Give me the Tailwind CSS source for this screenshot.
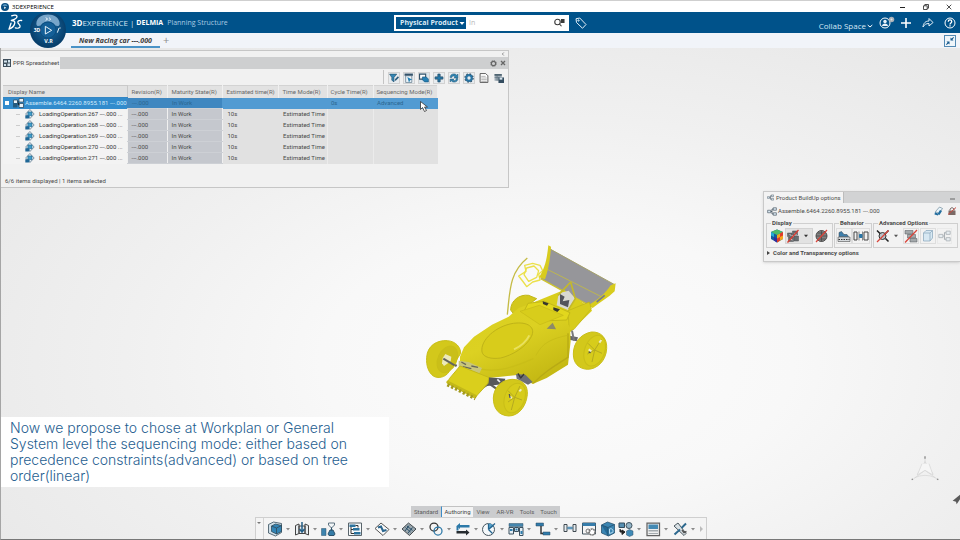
<!DOCTYPE html>
<html lang="en">
<head>
    <meta charset="UTF-8">
    <meta name="viewport" content="width=device-width, initial-scale=1.0">
    <title>3DEXPERIENCE</title>
    <script src="https://cdn.jsdelivr.net/npm/@tailwindcss/browser@4"></script>
</head>
<body class="h-screen flex flex-col overflow-hidden bg-[#ececec] font-['Open_Sans','Noto_Sans',sans-serif] text-[6px] leading-[10px] text-[#4a4a4a]">

    <!-- Shared icons -->
    <svg class="hidden" xmlns="http://www.w3.org/2000/svg">
        <symbol id="i-arrow" viewBox="0 0 6 6"><path d="M1 2h4L3 4.500z" fill="#8a8a8a"/></symbol>
        <symbol id="i-tree" viewBox="0 0 16 14">
            <path d="M1 5h5v4H1zM10 1h5v4h-5zM10 9h5v4h-5z" fill="#d8e6f0" stroke="#43525e"/>
            <path d="M6 7h2V3h2M8 7v4h2" fill="none" stroke="#43525e" stroke-width="1.300"/>
        </symbol>
        <symbol id="i-oper" viewBox="0 0 12 12">
            <path d="M6.500 .6 11.600 6 6.500 11.400 1.400 6z" fill="#f3f8fb" stroke="#4c6c82" stroke-width=".9"/>
            <path d="M4 3.500h5v4.500H4z" fill="#3f9cc9" stroke="#1d5d85" stroke-width=".7"/>
            <path d="M1 7.500h4l1.500 2-1.500 2H1z" fill="#1f6796"/>
        </symbol>
    </svg>

    <!-- Title bar -->
    <div class="h-3 shrink-0 flex items-center justify-between border-t border-[#cfcfcf] bg-white pl-px pr-2">
        <div class="flex items-center gap-[3px] text-black">
            <svg class="w-2 h-2" viewBox="0 0 10 10"><circle cx="5" cy="5" r="5" fill="#0c4f80"/><path d="M2 3.500a3 2 0 0 1 6 0z" fill="#6fa8cf"/><path d="M4 4.500 6.500 6 4 7.500z" fill="#fff"/></svg>
            <span>3DEXPERIENCE</span>
        </div>
        <div class="flex items-center gap-[17px]">
            <button aria-label="Minimize"><svg class="w-[6px] h-[6px]" viewBox="0 0 6 6"><path d="M0 3.500h5" stroke="#222"/></svg></button>
            <button aria-label="Restore"><svg class="w-[6px] h-[6px]" viewBox="0 0 6 6" fill="none" stroke="#222" stroke-width=".8"><path d="M.5 1.800h3.700v3.700H.5zM1.800 1.800V.5h3.700v3.700H4.200"/></svg></button>
            <button aria-label="Close"><svg class="w-[6px] h-[6px]" viewBox="0 0 6 6"><path d="M.7.7l4.600 4.600M5.300.7.7 5.300" stroke="#222" stroke-width=".8"/></svg></button>
        </div>
    </div>

    <!-- Top bar -->
    <header class="relative h-[21px] shrink-0 grid grid-cols-[394px_1fr_auto] items-center bg-[#00528a] text-white">
        <div class="flex items-center pl-2">
            <svg class="w-[15px] h-[17px]" viewBox="0 0 45 50" fill="none" stroke="#fff" stroke-width="4" stroke-linecap="round" stroke-linejoin="round">
                <path d="M11 5c7-3 16-3 16 2 0 6-10 10-17 12 8 0 12 3 10 9-2 8-9 14-17 17l6-18"/>
                <path d="M41 19c-8-1-13 2-11 7 2 4 8 7 6 12-2 4-9 5-14 3"/>
            </svg>
            <h1 class="ml-[49px] flex items-center gap-[2px] text-[8px] text-[#d5e4f0]">
                <span><b class="text-white">3D</b>EXPERIENCE</span>
                <span>|</span>
                <b class="text-[7px] text-white">DELMIA</b>
                <span class="ml-[2px] text-[7px] text-[#a9cae3]">Planning Structure</span>
            </h1>
        </div>
        <div class="flex items-center gap-[6px]">
            <form class="flex h-4 w-[175px] items-center bg-white p-[2px] pr-1">
                <div class="relative h-full w-[70px] bg-[#00528a]">
                    <select aria-label="Search type" class="h-full w-full appearance-none bg-transparent pl-[4px] text-[7px] leading-3 font-bold text-[#dcebf6]">
                        <option>Physical Product</option>
                    </select>
                    <svg class="pointer-events-none absolute right-px top-1 w-[6px] h-[6px]" viewBox="0 0 6 6"><path d="M.5 1h5L3 4z" fill="#fff"/></svg>
                </div>
                <input type="text" aria-label="Search" placeholder="In" class="min-w-0 flex-1 px-[3px] text-[7px] text-gray-600 outline-none placeholder:text-[#b9b9b9]">
                <button type="button" aria-label="Search">
                    <svg class="w-[11px] h-[9px]" viewBox="0 0 22 18" fill="none" stroke="#3b3b3b" stroke-width="2.200"><circle cx="7" cy="8" r="5.500"/><path d="m11 12 4 4.500"/><path d="M15 3h5v6h-5z" fill="#3b3b3b"/></svg>
                </button>
            </form>
            <button aria-label="Tags">
                <svg class="w-3 h-3" viewBox="0 0 24 24" fill="none" stroke="#e5f0f8" stroke-width="2" stroke-linejoin="round"><path d="M2 3.500 9.500 2 22 15l-7 7.500L3 11z"/><circle cx="7" cy="7" r="1.300"/></svg>
            </button>
        </div>
        <div class="flex items-center pr-1">
            <button class="flex items-center gap-px pt-[7px] text-[8px] text-[#d5e7f5]">Collab Space
                <svg class="w-[6px] h-[6px]" viewBox="0 0 6 6" fill="none" stroke="#fff"><path d="m.7 2 2.300 2 2.300-2"/></svg>
            </button>
            <button class="ml-[6px]" aria-label="Profile">
                <svg class="w-4 h-[13px]" viewBox="0 0 32 26"><circle cx="12" cy="14" r="10" fill="none" stroke="#fff" stroke-width="2"/><circle cx="12" cy="11" r="3.500" fill="#e8f2f9"/><path d="M6 20c0-7 12-7 12 0z" fill="#e8f2f9"/><circle cx="25" cy="7" r="5.500" fill="#a9b1b8"/><circle cx="25" cy="7" r="2" fill="#e6e6e6"/></svg>
            </button>
            <button class="ml-[6px]" aria-label="Add"><svg class="w-[10px] h-[10px]" viewBox="0 0 10 10"><path d="M5 0v10M0 5h10" stroke="#fff" stroke-width="1.600"/></svg></button>
            <button class="ml-[11px]" aria-label="Share"><svg class="w-3 h-3" viewBox="0 0 24 24" fill="none" stroke="#e5f1f9" stroke-width="2" stroke-linejoin="round"><path d="M2 20c1-8 5-12 12-12V3l8 8-8 7v-5c-6 0-9 2-12 7z"/></svg></button>
            <button class="ml-[10px]" aria-label="Help"><svg class="w-3 h-3" viewBox="0 0 24 24" fill="none" stroke="#fff" stroke-width="2"><circle cx="12" cy="12" r="10"/><path d="M8.500 9.500c0-5 7-4.500 7-.5 0 3-3.500 3-3.500 6M12 16.500v2.500" stroke-width="2.600"/></svg></button>
        </div>

        <!-- Compass -->
        <button class="absolute left-[30px] top-0 z-10" aria-label="Compass">
            <svg class="w-9 h-9" viewBox="0 0 108 108">
                <defs><radialGradient id="compass" cx=".5" cy=".45"><stop offset="0" stop-color="#1b6ea8"/><stop offset="1" stop-color="#073f6c"/></radialGradient></defs>
                <circle cx="54" cy="54" r="54" fill="url(#compass)"/>
                <path d="M19 35C20-2 88-2 89 35c0 9-9 7-14 5-8-15-34-15-42 0-6 2-14 4-14-5z" fill="#77a5c9"/>
                <circle cx="54" cy="54" r="24" fill="#145f97" stroke="#0a4775" stroke-width="2"/>
                <path d="M46 43v23l19-11z" fill="none" stroke="#e8f3fa" stroke-width="3"/>
                <path d="M47 17l6 4-6 4M57 17l5 4-5 5" fill="none" stroke="#eaf4fb" stroke-width="3"/>
                <path d="M87 48l-5 14M90 46v4" stroke="#e8f3fa" stroke-width="3"/>
                <text x="11" y="61" font-size="15" font-weight="700" fill="#fff">3D</text>
                <text x="43" y="94" font-size="16" font-weight="700" fill="#fff">V.R</text>
            </svg>
        </button>
    </header>

    <!-- Document tabs -->
    <nav class="h-[15px] shrink-0 flex items-stretch bg-[#f1f4f9] pl-[71px] pr-1">
        <a href="#" class="w-[89px] border-b-2 border-[#4a93c7] pl-2 text-[7px] leading-[15px] font-bold italic text-[#3d3d3d] whitespace-nowrap">New Racing car ---.000</a>
        <button class="ml-[3px] pb-px text-[11px] text-[#8d8d8d]" aria-label="New tab">+</button>
        <button class="ml-auto mt-[2px] h-3 w-3 border border-[#5289b3] bg-[#eef5fa]" aria-label="Collapse">
            <svg class="w-[10px] h-[10px]" viewBox="0 0 20 20" fill="#14588c"><path d="m11 3 2 2 4-3 1 1-3 4 2 2h-6zM9 17l-2-2-4 3-1-1 3-4-2-2h6z"/></svg>
        </button>
    </nav>

    <!-- 3D canvas -->
    <main class="relative flex-1 overflow-hidden border-l border-b border-l-[#a5a5a5] border-b-[#777] bg-[radial-gradient(ellipse_at_58%_64%,#fcfcfc_0%,#f8f8f8_30%,#f0f0f0_55%,#e8e8e8_85%)] font-[Roboto,'Noto_Sans',sans-serif]">

        <!-- PPR spreadsheet -->
        <section class="absolute left-0 top-[2px] flex w-[508px] flex-col border border-l-0 border-[#c6c6c6] bg-[#f1f1f1]">
            <div class="flex h-[6px] justify-end pr-[3px]">
                <svg class="w-[4px] h-[6px]" viewBox="0 0 4 6" fill="none" stroke="#777" stroke-width=".8"><path d="M2.800 1.500 1.300 3l1.500 1.500"/></svg>
            </div>
            <div class="flex h-3 items-stretch justify-between bg-[#cecfd0]">
                <h2 class="flex w-[59px] items-center gap-[2px] bg-[#f3f3f3] pl-[2px] whitespace-nowrap">
                    <svg class="w-2 h-2 shrink-0" viewBox="0 0 16 16"><path d="M0 0h16v16H0z" fill="#40505d"/><path d="M2 3h6v4H2zM10 2h4v5h-4zM2 10h4v4H2zM9 9h5v5H9z" fill="#d5e5ef"/></svg>
                    PPR Spreadsheet
                </h2>
                <div class="flex items-center gap-[3px] pr-[2px]">
                    <button aria-label="Settings"><svg class="w-[7px] h-[7px]" viewBox="0 0 14 14"><circle cx="7" cy="7" r="4.200" fill="none" stroke="#666" stroke-width="2.200"/><circle cx="7" cy="7" r="6" fill="none" stroke="#666" stroke-width="1.500" stroke-dasharray="2.400 2.300"/></svg></button>
                    <button aria-label="Close"><svg class="w-[6px] h-[6px]" viewBox="0 0 6 6"><path d="m1 1 4 4M5 1 1 5" stroke="#666" stroke-width="1.300"/></svg></button>
                </div>
            </div>
            <div class="flex h-4 items-end justify-end gap-[3px] pr-[3px] pb-px">
                <span class="h-[14px] w-px bg-[#c4c4c4] mr-px"></span>
                <button class="border border-[#d2d2d2] bg-[#e8ecef]" aria-label="Filter"><svg class="w-[10px] h-[10px]" viewBox="0 0 18 18"><path d="M1 2h13l-5 6v8l-4-3V8z" fill="#3385b3" stroke="#254a63"/><path d="m10 15 1-4 5-5 2 2-5 5z" fill="#2e5e7f"/></svg></button>
                <button class="border border-[#d2d2d2] bg-[#e8ecef]" aria-label="Select in tree"><svg class="w-[10px] h-[10px]" viewBox="0 0 18 18"><path d="M1 1h15v4H1z" fill="#34536a"/><path d="M3 5h11v12H3z" fill="#eef5f9" stroke="#34536a"/><path d="m6 7 9 5-4 1-2 4z" fill="#2680b4"/></svg></button>
                <button class="border border-[#d2d2d2] bg-[#dbe4ea]" aria-label="Linked selection"><svg class="w-[10px] h-[10px]" viewBox="0 0 18 18"><path d="M1 2h11v9H1z" fill="#fff" stroke="#34536a" stroke-width="2"/><path d="M6 7h7l4 4v5h-7l-4-4z" fill="#2680b4" stroke="#1b5277"/></svg></button>
                <button class="border border-[#d2d2d2] bg-[#e8ecef]" aria-label="Add"><svg class="w-[10px] h-[10px]" viewBox="0 0 18 18"><path d="M7 2h4v5h5v4h-5v5H7v-5H2V7h5z" fill="#257aaa" stroke="#28516d" stroke-width="1.500"/></svg></button>
                <button class="border border-[#d2d2d2] bg-[#e8ecef]" aria-label="Refresh"><svg class="w-[10px] h-[10px]" viewBox="0 0 18 18" fill="#2f86b5" stroke="#285b7a"><path d="M2 8c0-7 9-8 12-4l2-2v7h-7l2-2c-2-3-6-2-6 1zM16 10c0 7-9 8-12 4l-2 2v-5h7l-2 2c3 2 6 0 6-3z"/></svg></button>
                <button class="border border-[#d2d2d2] bg-[#e8ecef]" aria-label="Options"><svg class="w-[10px] h-[10px]" viewBox="0 0 18 18" fill="none"><circle cx="9" cy="9" r="5" stroke="#2775a5" stroke-width="4"/><circle cx="9" cy="9" r="7.500" stroke="#34536a" stroke-width="2" stroke-dasharray="3 2.900"/></svg></button>
                <button class="border border-transparent" aria-label="Report"><svg class="w-[10px] h-[10px]" viewBox="0 0 18 18"><path d="M2 1h10l4 4v12H2z" fill="#fff" stroke="#444" stroke-width="1.500"/><path d="M4 6h8M4 9h10M4 12h10M4 15h10" stroke="#777"/></svg></button>
                <button class="border border-transparent" aria-label="Save table"><svg class="w-[10px] h-[10px]" viewBox="0 0 18 18"><path d="M1 2h13v12H1z" fill="#9daab4"/><path d="M1 2h13v3H1zM1 8h13v1H1zM5 5h1v9H5z" fill="#506572"/><path d="M8 8h10v10H8z" fill="#344d60"/><path d="M10 8h5v4h-5z" fill="#d9e6ef"/></svg></button>
            </div>
            <table class="ml-[2px] w-[435px] table-fixed border-collapse whitespace-nowrap text-left">
                <colgroup><col class="w-[124px]"><col class="w-10"><col class="w-[55px]"><col class="w-14"><col class="w-[49px]"><col class="w-[46px]"><col></colgroup>
                <thead>
                    <tr class="h-3 bg-[#e2e2e2] text-[#686868]">
                        <th class="border-t border-r border-[#c9c9c9] border-b border-b-[#3486c4] p-0 pl-[5px] font-normal">Display Name</th>
                        <th class="border-t border-x border-[#d3d3d3] border-x-[#f0f0f0] p-0 pl-1 font-normal">Revision(R)</th>
                        <th class="border-t border-x border-[#d3d3d3] border-x-[#f0f0f0] p-0 pl-1 font-normal">Maturity State(R)</th>
                        <th class="border-t border-x border-[#d3d3d3] border-x-[#f0f0f0] p-0 pl-1 font-normal">Estimated time(R)</th>
                        <th class="border-t border-x border-[#d3d3d3] border-x-[#f0f0f0] p-0 pl-1 font-normal">Time Mode(R)</th>
                        <th class="border-t border-x border-[#d3d3d3] border-x-[#f0f0f0] p-0 pl-[3px] font-normal">Cycle Time(R)</th>
                        <th class="border-t border-x border-[#d3d3d3] border-x-[#f0f0f0] p-0 pl-[3px] font-normal">Sequencing Mode(R)</th>
                    </tr>
                </thead>
                <tbody>
                    <tr class="h-[11px] bg-[#529bd2] text-[#2b6690]">
                        <td class="bg-[#328ccd] p-0 text-[#d3ebfb]">
                            <div class="flex items-center pl-[2px]">
                                <span class="h-[4px] w-[4px] shrink-0 bg-white"></span>
                                <svg class="ml-[4px] w-[11px] h-[10px] shrink-0" viewBox="0 0 22 20"><path d="M1 4h8v7H1zM12 1h9v7h-9zM12 11h9v8h-9z" fill="#e9f2f8" stroke="#29475c" stroke-width="1.500"/><path d="M0 10h9v9H0z" fill="#245b80"/><path d="M9 7h3M10 7v7h3" stroke="#29475c" stroke-width="1.500"/></svg>
                                <span class="ml-px">Assemble.6464.2260.8955.181 ---.000</span>
                            </div>
                        </td>
                        <td class="bg-[#3f87c0] p-0 pl-[5px]">---.000</td>
                        <td class="bg-[#3f87c0] p-0 pl-[5px]">In Work</td>
                        <td class="p-0"></td>
                        <td class="p-0"></td>
                        <td class="p-0 pl-1">0s</td>
                        <td class="p-0 pl-1">Advanced</td>
                    </tr>
                    <tr class="h-[11px] bg-[#e1e1e1]">
                        <td class="bg-[#f3f3f3] p-0"><div class="flex items-center gap-[4px] pl-[13px]"><span class="h-px w-1 shrink-0 bg-[#ccc]"></span><svg class="w-[11px] h-[10px] shrink-0"><use href="#i-oper"/></svg><span class="text-[#333]">LoadingOperation.267 ---.000 ...</span></div></td>
                        <td class="border border-[#cdd0d5] border-x-[#f0f0f0] bg-[#c5c8ce] p-0 pl-1">---.000</td>
                        <td class="border border-[#cdd0d5] border-x-[#f0f0f0] bg-[#c5c8ce] p-0 pl-1">In Work</td>
                        <td class="p-0 pl-[5px]">10s</td>
                        <td class="p-0 pl-[5px]">Estimated Time</td>
                        <td class="border-x border-[#ebebeb] p-0"></td>
                        <td class="p-0"></td>
                    </tr>
                    <tr class="h-[11px] bg-[#e1e1e1]">
                        <td class="bg-[#f3f3f3] p-0"><div class="flex items-center gap-[4px] pl-[13px]"><span class="h-px w-1 shrink-0 bg-[#ccc]"></span><svg class="w-[11px] h-[10px] shrink-0"><use href="#i-oper"/></svg><span class="text-[#333]">LoadingOperation.268 ---.000 ...</span></div></td>
                        <td class="border border-[#cdd0d5] border-x-[#f0f0f0] bg-[#c5c8ce] p-0 pl-1">---.000</td>
                        <td class="border border-[#cdd0d5] border-x-[#f0f0f0] bg-[#c5c8ce] p-0 pl-1">In Work</td>
                        <td class="p-0 pl-[5px]">10s</td>
                        <td class="p-0 pl-[5px]">Estimated Time</td>
                        <td class="border-x border-[#ebebeb] p-0"></td>
                        <td class="p-0"></td>
                    </tr>
                    <tr class="h-[11px] bg-[#e1e1e1]">
                        <td class="bg-[#f3f3f3] p-0"><div class="flex items-center gap-[4px] pl-[13px]"><span class="h-px w-1 shrink-0 bg-[#ccc]"></span><svg class="w-[11px] h-[10px] shrink-0"><use href="#i-oper"/></svg><span class="text-[#333]">LoadingOperation.269 ---.000 ...</span></div></td>
                        <td class="border border-[#cdd0d5] border-x-[#f0f0f0] bg-[#c5c8ce] p-0 pl-1">---.000</td>
                        <td class="border border-[#cdd0d5] border-x-[#f0f0f0] bg-[#c5c8ce] p-0 pl-1">In Work</td>
                        <td class="p-0 pl-[5px]">10s</td>
                        <td class="p-0 pl-[5px]">Estimated Time</td>
                        <td class="border-x border-[#ebebeb] p-0"></td>
                        <td class="p-0"></td>
                    </tr>
                    <tr class="h-[11px] bg-[#e1e1e1]">
                        <td class="bg-[#f3f3f3] p-0"><div class="flex items-center gap-[4px] pl-[13px]"><span class="h-px w-1 shrink-0 bg-[#ccc]"></span><svg class="w-[11px] h-[10px] shrink-0"><use href="#i-oper"/></svg><span class="text-[#333]">LoadingOperation.270 ---.000 ...</span></div></td>
                        <td class="border border-[#cdd0d5] border-x-[#f0f0f0] bg-[#c5c8ce] p-0 pl-1">---.000</td>
                        <td class="border border-[#cdd0d5] border-x-[#f0f0f0] bg-[#c5c8ce] p-0 pl-1">In Work</td>
                        <td class="p-0 pl-[5px]">10s</td>
                        <td class="p-0 pl-[5px]">Estimated Time</td>
                        <td class="border-x border-[#ebebeb] p-0"></td>
                        <td class="p-0"></td>
                    </tr>
                    <tr class="h-[11px] bg-[#e1e1e1]">
                        <td class="bg-[#f3f3f3] p-0"><div class="flex items-center gap-[4px] pl-[13px]"><span class="h-px w-1 shrink-0 bg-[#ccc]"></span><svg class="w-[11px] h-[10px] shrink-0"><use href="#i-oper"/></svg><span class="text-[#333]">LoadingOperation.271 ---.000 ...</span></div></td>
                        <td class="border border-[#cdd0d5] border-x-[#f0f0f0] bg-[#c5c8ce] p-0 pl-1">---.000</td>
                        <td class="border border-[#cdd0d5] border-x-[#f0f0f0] bg-[#c5c8ce] p-0 pl-1">In Work</td>
                        <td class="p-0 pl-[5px]">10s</td>
                        <td class="p-0 pl-[5px]">Estimated Time</td>
                        <td class="border-x border-[#ebebeb] p-0"></td>
                        <td class="p-0"></td>
                    </tr>
                </tbody>
            </table>
            <p class="mt-3 pb-px pl-1">6/6 items displayed | 1 items selected</p>
        </section>

        <!-- Mouse pointer -->
        <svg class="absolute left-[419px] top-[53px] w-2 h-[11px]" viewBox="0 0 16 22"><path d="M1 1v16l4-4 4 8 4-2-4-7h6z" fill="#fff" stroke="#333" stroke-width="1.600"/></svg>

        <!-- Racing car -->
        <svg class="absolute left-[409px] top-[192px] w-[220px] h-[190px]" viewBox="0 0 660 570" stroke-linejoin="round">
            <defs>
                <linearGradient id="body" x1="0" y1="0" x2=".6" y2="1"><stop offset="0" stop-color="#d9ce20"/><stop offset=".5" stop-color="#dcd122"/><stop offset="1" stop-color="#c5b914"/></linearGradient>
            </defs>
            <!-- antenna and bracket -->
            <path d="M292 224c8-70 5-125 60-170" fill="none" stroke="#c5bb45" stroke-width="4"/>
            <path d="m326 108 22-14-4-18 24-6 22 6 8 16-12 10 4 18-22 6-18 14-10-14z" fill="none" stroke="#ebe04a" stroke-width="4"/>
            <path d="m342 104 8-20 22-6 14 14-6 20-24 12z" fill="none" stroke="#ebe04a" stroke-width="4"/>
            <!-- rear wing -->
            <path d="m420 26 194 108-70 66-152-84 14-30z" fill="#96969a"/>
            <path d="m404 84 170 86" stroke="#cfc42e" stroke-width="2"/>
            <path d="m392 116 152 84" stroke="#cfc42e" stroke-width="4"/>
            <path d="M420 27 614 134" stroke="#a5a16a" stroke-width="3"/>
            <path d="m415 16 8 4c-2 36-8 70-18 98l-18-6c18-28 24-56 28-96z" fill="#d8cc1e"/>
            <path d="m617 130-3 24c-20 20-46 34-66 50l-14-8c30-16 52-36 68-60z" fill="#d8cc1e"/>
            <path d="m584 166-24 20" stroke="#777b8a" stroke-width="5"/>
            <!-- rear tower -->
            <path d="M302 210c0-28 26-48 54-44l24 10-66 50z" fill="#d3c81d" stroke="#c2b718" stroke-width="3"/>
            <path d="m368 188 94-38 80 54 4 8-68 66-120-42z" fill="#d9ce1c"/>
            <path d="m446 160 30-8 20 24-22 34-34-14z" fill="#d9d9d2"/>
            <path d="m450 162 14 8-6 14 20-4-4 22-24-10z" fill="#53545b"/>
            <path d="m482 126-38 40m38-40 14 50-20 32" fill="none" stroke="#c4b92a" stroke-width="5"/>
            <path d="m474 212 64-26 6 20-52 62-14 6z" fill="#d7cc1c" stroke="#bdb218" stroke-width="2"/>
            <!-- rear axle -->
            <path d="m470 286 34 6-4 12-30-6z" fill="#65656a"/><path d="m486 272 6 30" stroke="#77777b" stroke-width="6"/>
            <!-- body -->
            <path d="m150 350 12-28 30-32 54-36 50-24 30-26 44-16 80 34 30 40 2 42-8 70-64 40-42 18-40-28-90 10-60-16-28-18z" fill="url(#body)"/>
            <path d="m354 190 50-6 76 34-10 22-52 2-78-24z" fill="#e2d71d" stroke="#c3b817" stroke-width="3"/>
            <path d="m330 214 58-18 72 30-70 28z" fill="#d8cd1b" stroke="#c5ba17" stroke-width="2"/>
            <path d="m398 184 18 6-5 7-12-5zM430 202l20 6-8 8-12-6z" fill="#37372d"/>
            <path d="m410 266 18-18 10 20z" fill="#8d8a68"/>
            <path d="M474 280v72c-44 28-74 46-104 78" fill="none" stroke="#b8aa14" stroke-width="4"/>
            <path d="M378 346c20-40 50-50 94-60" fill="none" stroke="#c9be18" stroke-width="3"/>
            <path d="M186 380c58 22 112 8 184-24" fill="none" stroke="#c9be18" stroke-width="4"/>
            <path d="M216 336c-6-36 42-78 94-86 44-6 68 12 54 40-16 32-58 56-92 64-28 4-52-2-56-18z" fill="#d8cc1b" stroke="#bfb318" stroke-width="3"/>
            <path d="M312 328c22-10 38-26 46-42" fill="none" stroke="#e9e15e" stroke-width="6"/>
            <!-- front suspension -->
            <path d="m104 356 36 22M228 424l34 24" stroke="#5f605f" stroke-width="7"/>
            <path d="m146 362 30 4 40 18-10 20-60-20z" fill="#c9c67a"/>
            <path d="m154 366 14 8M184 378l20 4M158 380l26 6" stroke="#666759" stroke-width="4"/>
            <path d="m196 460 36-48 54 4-4 16-50 6z" fill="#57585b"/>
            <path d="m318 402 28 2 22 22-14 8-34-18z" fill="#6d6f77"/>
            <path d="m324 400 8 14 10-12" fill="none" stroke="#37383a" stroke-width="4"/>
            <path d="m262 418 8 8" stroke="#eee" stroke-width="5"/>
            <!-- bumper -->
            <path d="m150 378 86 34-2 18-40 44-82-44 6-14z" fill="#dacf1c" stroke="#c5ba17" stroke-width="3"/>
            <path d="m110 424 90 46" stroke="#c3b819" stroke-width="8"/>
            <path d="m112 434 84 42" stroke="#a39a1e" stroke-width="10" stroke-dasharray="7 6"/>
            <!-- wheels -->
            <g fill="#d3c81b" stroke="#c9be18" stroke-width="3">
                <path d="M50 352c2-36 32-52 62-50 26 2 40 20 40 38l-34 54c-12 20-36 22-48 14-14-10-22-30-20-56z"/>
                <ellipse cx="112" cy="358" rx="28" ry="42" transform="rotate(25 112 358)" fill="#cabf19"/>
                <path d="M490 342c0-34 22-60 54-66 30-2 48 20 46 50-2 38-30 62-58 62-28-2-42-20-42-46z"/>
                <ellipse cx="554" cy="332" rx="30" ry="48" transform="rotate(20 554 332)" fill="#d7cc1b"/>
                <path d="M250 474c2-34 24-54 56-56 32 0 48 18 46 46-4 38-28 64-56 64-30-2-46-22-46-54z"/>
                <ellipse cx="314" cy="474" rx="30" ry="46" transform="rotate(20 314 474)" fill="#d7cc1b"/>
            </g>
            <path d="m98 354 8-12 18 8-2 14-20 14-6-8z" fill="#ece9b8"/>
            <path d="m100 356 34 20" stroke="#63645f" stroke-width="6"/>
            <g fill="none" stroke="#b5aa20" stroke-width="3">
                <path d="m554 330-20-20m20 20 20-32m-20 32 22 10m-22-10-8 36m8-36-22 12M314 472l-20-20m20 20 16-34m-16 34 22 8m-22-8-10 38m10-38-20 14"/>
            </g>
            <path d="m536 328 8 6M298 470l8 4M574 300l-6 8M334 448l-6 6" stroke="#eeecc9" stroke-width="6"/>
            <path d="m536 336 6 2M298 462l2 12" stroke="#555" stroke-width="4"/>
        </svg>

        <!-- Product BuildUp options -->
        <section class="absolute right-0 top-[143px] flex w-[197px] flex-col border border-r-0 border-[#c9c9c9] bg-[#f2f2f2] shadow-sm">
            <div class="flex h-[11px] items-stretch justify-between bg-[#d2d3d4]">
                <h2 class="flex w-20 items-center gap-[2px] border-r border-[#bcbcbc] bg-[#f3f3f3] pl-[3px] whitespace-nowrap">
                    <svg class="w-[7px] h-[7px] shrink-0"><use href="#i-tree"/></svg>Product BuildUp options
                </h2>
                <button class="pr-1" aria-label="Minimize"><svg class="w-[6px] h-[6px]" viewBox="0 0 6 6"><path d="M0 4h5" stroke="#666"/></svg></button>
            </div>
            <div class="flex h-4 items-center px-[3px]">
                <svg class="w-[10px] h-[9px]"><use href="#i-tree"/></svg>
                <span class="ml-px">Assemble.6464.2260.8955.181 ---.000</span>
                <button class="ml-auto" aria-label="Erase"><svg class="w-[10px] h-[10px]" viewBox="0 0 20 20"><path d="m3 11 8-9 6 3-7 10z" fill="#e8f4fa" stroke="#3f6177"/><path d="m2 12 7 4-1 3-7-2zM12 8l4 2-5 8-4-2z" fill="#236e9f"/></svg></button>
                <button class="ml-[3px]" aria-label="Lock"><svg class="w-[10px] h-[10px]" viewBox="0 0 20 20"><path d="M3 9h14v9H3z" fill="#7b6965"/><path d="M6 9V6q4-6 8 0v3" fill="none" stroke="#7c6c69" stroke-width="2"/><path d="M2 17 18 3" stroke="#c94b42" stroke-width="2"/></svg></button>
            </div>
            <div class="mx-[2px] flex items-stretch gap-px">
                <fieldset class="h-[29px] w-[67px] min-w-0 border border-[#cfcfcf]">
                    <legend class="ml-1 h-[9px] px-px leading-[7px] font-bold">Display</legend>
                    <div class="flex items-center gap-px pl-[3px]">
                        <button aria-label="Colours"><svg class="w-[14px] h-[14px]" viewBox="0 0 28 28"><path d="M14 1 26 6v14L14 27 2 20V6z" fill="#17599c"/><path d="m14 1 12 5-12 6L2 6z" fill="#4cba6a"/><path d="M14 12 26 6v14L14 27z" fill="#f2a71f"/><path d="m20 9 6-3v7l-6 3zM14 19l6-3v7l-6 4z" fill="#de3b2d"/><path d="m2 6 6 3v7l-6-3z" fill="#25acd6"/><path d="m8 16 6 3v8l-6-4z" fill="#342c9d"/></svg></button>
                        <button class="flex items-center border border-[#d3d3d3] bg-[#e2e2e2]" aria-label="Parts display"><svg class="w-[14px] h-[14px]" viewBox="0 0 28 28"><path d="M3 8h9v7H3zM13 4h10v8H13zM5 16h10v9H5zM16 14h9v10h-9z" fill="#686c70" stroke="#4a4e51"/><path d="m7 11 4 2m6-4 4 2M8 20l5 2" stroke="#cfd2d4" stroke-width="2"/><path d="m3 27 22-25" stroke="#da3c32" stroke-width="2.500"/></svg><svg class="mx-[4px] w-[4px] h-[6px]" viewBox="0 0 6 6"><path d="M0 1h6L3 5z" fill="#333"/></svg></button>
                        <button aria-label="Mesh"><svg class="w-[15px] h-[14px]" viewBox="0 0 28 28"><circle cx="14" cy="14" r="11" fill="#818181" stroke="#505050" stroke-width="2"/><path d="M3 14h22M14 3v22M6 8h16M6 20h16" fill="none" stroke="#454545" stroke-width="1.500"/><path d="m3 26 22-24" stroke="#d8443a" stroke-width="2.500"/></svg></button>
                    </div>
                </fieldset>
                <fieldset class="h-[29px] w-[38px] min-w-0 border border-[#cfcfcf]">
                    <legend class="ml-1 h-[9px] px-px leading-[7px] font-bold">Behavior</legend>
                    <div class="flex items-center pl-px">
                        <button class="border border-[#ddd]" aria-label="Machine"><svg class="w-[14px] h-[14px]" viewBox="0 0 28 28"><path d="M2 16h24v9H2z" fill="#d6dadd" stroke="#333"/><path d="M4 15V7l5-2 5 6h6l3 4z" fill="#3f7fab" stroke="#283b49"/><path d="M3 21h22" stroke="#333" stroke-width="2" stroke-dasharray="3 2"/></svg></button>
                        <button class="border border-[#ddd]" aria-label="Spacing"><svg class="w-[16px] h-[14px]" viewBox="0 0 32 28" fill="none" stroke="#444" stroke-width="2"><path d="M2 6h6v16H2zM22 6h8v16h-8z"/><path d="M12 5v18M19 5v18" stroke="#888"/><path d="M13 11h5v6h-5z" fill="#2b76a6" stroke="#2b76a6"/></svg></button>
                    </div>
                </fieldset>
                <fieldset class="h-[29px] min-w-0 flex-1 border border-[#cfcfcf]">
                    <legend class="ml-1 h-[9px] px-px leading-[7px] font-bold">Advanced Options</legend>
                    <div class="flex items-center gap-px pl-[2px]">
                        <button class="flex items-center" aria-label="Explode"><svg class="w-[14px] h-[14px]" viewBox="0 0 28 28"><circle cx="13" cy="14" r="7" fill="#b9c2c8" stroke="#333" stroke-width="2"/><path d="m2 3 6 6M25 3l-6 6M25 25l-6-6" stroke="#222" stroke-width="3"/><path d="M2 26 25 3" stroke="#d8443a" stroke-width="2.500"/></svg><svg class="mx-[4px] w-[4px] h-[6px]" viewBox="0 0 6 6"><path d="M0 1h6L3 5z" fill="#555"/></svg></button>
                        <button class="border border-[#ddd]" aria-label="Sequence"><svg class="w-[14px] h-[14px]" viewBox="0 0 28 28"><path d="M2 3h16v7H2zM7 11h16v7H7zM12 19h14v7H12z" fill="#a3a8ab" stroke="#51565a"/><path d="M2 27 26 2" stroke="#d8443a" stroke-width="2.500"/></svg></button>
                        <button class="border border-[#ddd]" aria-label="Volume"><svg class="w-[14px] h-[14px]" viewBox="0 0 28 28" fill="#d7e8f3" stroke="#8ba8bd" stroke-width="1.500"><path d="M5 8 10 3h13v15l-5 6H5z"/><path d="M5 8h13v16M18 8l5-5" fill="none"/></svg></button>
                        <button class="border border-[#ddd] opacity-40" aria-label="Structure"><svg class="w-[13px] h-[14px]"><use href="#i-tree"/></svg></button>
                    </div>
                </fieldset>
            </div>
            <button class="flex items-center gap-[3px] pb-[3px] pl-[3px] font-bold">
                <svg class="w-[3px] h-[4px]" viewBox="0 0 3 4"><path d="M0 0v4l3-2z" fill="#444"/></svg>Color and Transparency options
            </button>
        </section>

        <!-- Caption -->
        <p class="absolute left-0 top-[369px] w-[388px] bg-white pt-[3px] pb-[3px] pl-[9px] font-[Inter,sans-serif] text-[14px] leading-4 font-light text-[#1f6090]">Now we propose to chose at Workplan or General<br>System level the sequencing mode: either based on<br>precedence constraints(advanced) or based on tree<br>order(linear)</p>

        <!-- Axis widget -->
        <svg class="absolute right-[20px] bottom-[56px] w-[30px] h-[28px]" viewBox="0 0 90 84" fill="none" stroke="#d3d3d3" stroke-width="2">
            <path d="M45 10v36M45 46 10 72M45 46l36 26M45 20 22 58M45 20l24 36M14 68q31-14 62 0"/>
            <path d="m36 26-14 34 23-14 24 14-12-34" fill="#f6f6f6"/>
            <path d="M45 4v7M5 74l4-2M81 72l4 2" stroke="#888" stroke-width="4"/>
        </svg>
        <svg class="absolute right-0 bottom-[34px] w-2 h-[11px]" viewBox="0 0 24 33"><path d="M24 2 2 20l10 3 2 8 10-15z" fill="#5a5a5a"/></svg>

        <!-- Action bar -->
        <section class="absolute bottom-0 left-[254px] w-[452px]">
            <div class="ml-[156px] flex h-[11px] w-[149px] bg-[#cbccce] text-[#5c5c5c]">
                <button class="w-[30px]">Standard</button>
                <button class="w-[32px] border-t border-l border-[#c2c2c2] border-l-[#3b8cc8] bg-[#f3f3f3] text-[#3f3f3f]">Authoring</button>
                <button class="w-[20px]">View</button>
                <button class="w-[24px]">AR-VR</button>
                <button class="w-[20px]">Tools</button>
                <button class="w-[23px]">Touch</button>
            </div>
            <div class="flex h-[22px] items-center justify-between border border-b-0 border-[#cfcfcf] bg-[#f4f4f4] pr-[2px]">
                <button class="h-full w-2 self-stretch border-r border-[#d4d4d4]" aria-label="Collapse bar"><svg class="mb-[12px] w-[6px] h-[4px]" viewBox="0 0 6 4"><path d="M1 1h4L3 3z" fill="#777"/></svg></button>
                <button class="flex items-center gap-[2px]" aria-label="Part"><svg class="w-4 h-4" viewBox="0 0 32 32" stroke="#2e4654" stroke-width="1.500"><path d="m3 7 10-5 16 3v18l-12 7L3 24z" fill="#cfdfe8"/><path d="m9 10 8-4 12 3v12l-10 5-10-5z" fill="#3384b4"/><path d="m9 10 10 4 10-5M19 14v12" fill="none"/></svg><svg class="w-[6px] h-[6px]"><use href="#i-arrow"/></svg></button>
                <button class="flex items-center gap-[2px]" aria-label="Insert"><svg class="w-4 h-4" viewBox="0 0 32 32" fill="#e9eef1" stroke="#444" stroke-width="2"><path d="m3 9 7-3v19l-7 3zM22 6l7 3v19l-7-3zM10 10h12v15H10z"/><path d="M16 2v19m-5-5 5 6 5-6" fill="none" stroke="#245f87" stroke-width="3"/></svg><svg class="w-[6px] h-[6px]"><use href="#i-arrow"/></svg></button>
                <button class="flex items-center gap-[2px]" aria-label="Resources"><svg class="w-4 h-4" viewBox="0 0 32 32"><path d="M3 15h9v14H3z" fill="#3d84ae" stroke="#2c526b"/><path d="M17 4h12v4l-6 6-6-6z" fill="#f2f6f8" stroke="#5c717f" stroke-width="2"/><path d="M23 13v6M20 18h6l4 8-2 3H18l-2-3z" fill="#357ca7" stroke="#2c526b" stroke-width="2"/></svg><svg class="w-[6px] h-[6px]"><use href="#i-arrow"/></svg></button>
                <button class="flex items-center gap-[2px]" aria-label="Gantt"><svg class="w-4 h-4" viewBox="0 0 32 32"><path d="M3 4h26v25H3z" fill="#f6f9fa" stroke="#59646b" stroke-width="2"/><path d="M5 7h12v5H5zM12 14h13v5H12zM14 22h13v5H14z" fill="#2b739e"/><path d="M17 9h5v4M8 12v5h4M8 17v8h6" fill="none" stroke="#333" stroke-width="2"/></svg><svg class="w-[6px] h-[6px]"><use href="#i-arrow"/></svg></button>
                <button class="flex items-center gap-[2px]" aria-label="Operation"><svg class="w-4 h-4" viewBox="0 0 32 32"><path d="M14 4 30 17 18 29 2 15z" fill="#fafafa" stroke="#555" stroke-width="2"/><path d="m8 13 6-2 4 9 7-2" fill="none" stroke="#2a668e" stroke-width="4"/></svg><svg class="w-[6px] h-[6px]"><use href="#i-arrow"/></svg></button>
                <button class="flex items-center gap-[2px]" aria-label="Header operation"><svg class="w-4 h-4" viewBox="0 0 32 32"><path d="M15 4 30 16 17 29 2 16z" fill="#9aa7ae" stroke="#454b4f" stroke-width="2"/><path d="m9 13 10 9M12 10l11 9M8 20l8-11M14 24l9-11" stroke="#294f69" stroke-width="2"/></svg><svg class="w-[6px] h-[6px]"><use href="#i-arrow"/></svg></button>
                <button class="flex items-center gap-[2px]" aria-label="Link"><svg class="w-4 h-4" viewBox="0 0 32 32" fill="none" stroke-width="2.500"><circle cx="12" cy="12" r="8" stroke="#333"/><circle cx="20" cy="20" r="8" stroke="#2c79a8"/></svg><svg class="w-[6px] h-[6px]"><use href="#i-arrow"/></svg></button>
                <button class="flex items-center gap-[2px]" aria-label="Flow"><svg class="w-4 h-4" viewBox="0 0 32 32"><path d="M3 10l7-6v4h19v5H10v3z" fill="#2c79a8"/><path d="M3 10h4v9H3z" fill="#2c79a8"/><path d="M29 23l-7 6v-4H3v-5h19v-3z" fill="#262c30"/></svg><svg class="w-[6px] h-[6px]"><use href="#i-arrow"/></svg></button>
                <button class="flex items-center gap-[2px]" aria-label="Time"><svg class="w-4 h-4" viewBox="0 0 32 32" fill="none"><circle cx="15" cy="17" r="12" stroke="#45545e" stroke-width="2" fill="#f4f8fa"/><path d="M15 5v12l10-6C23 6 19 5 15 5z" fill="#56a2cc"/><path d="M15 17V6M15 17l8 8M15 17l13-12" stroke="#24658f" stroke-width="2.500"/></svg><svg class="w-[6px] h-[6px]"><use href="#i-arrow"/></svg></button>
                <button class="flex items-center gap-[2px]" aria-label="Balancing"><svg class="w-4 h-4" viewBox="0 0 32 32"><path d="M2 5h28v6H2z" fill="#4486ae" stroke="#31536a"/><path d="M2 13h9v13H2zM13 13h8v8h-8zM23 13h7v16h-7z" fill="#e6eff5" stroke="#3a505f" stroke-width="2"/><path d="M4 16h5v4H4zM15 15h4v4h-4zM25 20h4v6h-4z" fill="#2f7eae"/></svg><svg class="w-[6px] h-[6px]"><use href="#i-arrow"/></svg></button>
                <button class="flex items-center gap-[2px]" aria-label="Precedence"><svg class="w-4 h-4" viewBox="0 0 32 32"><path d="M2 4h15v6H2zM16 22h14v6H16z" fill="#307baa" stroke="#2a4b61"/><path d="M12 10v7v8h4" fill="none" stroke="#34373a" stroke-width="3"/></svg><svg class="w-[6px] h-[6px]"><use href="#i-arrow"/></svg></button>
                <button aria-label="Distance"><svg class="w-4 h-4" viewBox="0 0 32 32" fill="#e6edf1" stroke="#414a50" stroke-width="2"><path d="M4 7h6v14H4zM22 7h6v14h-6z"/><path d="M10 14h12m-8-3v6m4-6v6" stroke="#2c76a6" stroke-width="2"/></svg></button>
                <button aria-label="Window options"><svg class="w-4 h-4" viewBox="0 0 32 32"><path d="M3 4h26v22H3z" fill="#f6f6f6" stroke="#42525d" stroke-width="2"/><path d="M3 4h26v6H3z" fill="#367dab"/><circle cx="22" cy="22" r="6" fill="#fff" stroke="#777" stroke-width="3" stroke-dasharray="4 1"/><circle cx="14" cy="20" r="4" fill="none" stroke="#777" stroke-width="2"/></svg></button>
                <button aria-label="Product"><svg class="w-4 h-4" viewBox="0 0 32 32" stroke="#244e6a" stroke-width="1.500"><path d="m3 8 12-6 14 5v17l-12 6-14-6z" fill="#3b85b2"/><path d="m3 8 13 5v17M16 13l13-6" fill="#246995"/><path d="M19 16v9l6-2c3-5-1-9-6-7z" fill="none" stroke="#b7ddf2" stroke-width="2"/></svg></button>
                <button class="flex items-center gap-[2px]" aria-label="Exchange"><svg class="w-4 h-4" viewBox="0 0 32 32"><path d="M2 4h11v9H2z" fill="#568fb2" stroke="#334c5c" stroke-width="2"/><circle cx="22" cy="9" r="6" fill="#92b4c7" stroke="#40535f" stroke-width="2"/><path d="m17 20 6-3 7 3v8l-7 3-6-3z" fill="#408ab6" stroke="#31536a"/><path d="M4 16v6h6m-2-4v9l6-5z" fill="#222" stroke="#222" stroke-width="2"/></svg><svg class="w-[6px] h-[6px]"><use href="#i-arrow"/></svg></button>
                <button class="flex items-center gap-[2px]" aria-label="Panel"><svg class="w-4 h-4" viewBox="0 0 32 32"><path d="M4 4h25v25H4z" fill="#eee" stroke="#626262" stroke-width="2.500"/><path d="M7 7h19v9H7z" fill="#448ab4"/><path d="M7 18h19v3H7zM7 24h19v2H7z" fill="#a4abaf"/></svg><svg class="w-[6px] h-[6px]"><use href="#i-arrow"/></svg></button>
                <button class="flex items-center gap-[2px]" aria-label="Tools"><svg class="w-4 h-4" viewBox="0 0 32 32"><path d="m4 10 8-6 16 21-4 4z" fill="#d9e1e5" stroke="#4c5960" stroke-width="2"/><path d="m28 5-9 9M16 17 5 27" stroke="#2c688e" stroke-width="4"/><path d="m20 18 4 5 5-2" fill="none" stroke="#555" stroke-width="3"/></svg><svg class="w-[6px] h-[6px]"><use href="#i-arrow"/></svg></button>
                <button aria-label="More"><svg class="w-[5px] h-[6px]" viewBox="0 0 5 6"><path d="M1 0v6l3-3z" fill="#bbb"/></svg></button>
            </div>
        </section>
    </main>
</body>
</html>
